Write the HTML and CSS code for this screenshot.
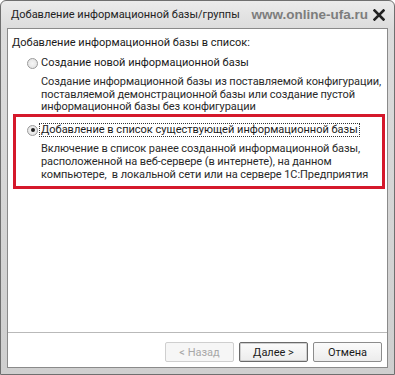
FILE: index.html
```html
<!DOCTYPE html>
<html lang="ru">
<head>
<meta charset="utf-8">
<title>Добавление информационной базы/группы</title>
<link rel="stylesheet" href="styles.css">
</head>
<body>
<div class="window">
  <div class="titlebar">
    <span class="title">Добавление информационной базы/группы</span>
    <span class="watermark">www.online-ufa.ru</span>
    <svg class="close" width="12" height="12" viewBox="0 0 12 12"><path d="M1.5 1.5 L10.5 10.5 M10.5 1.5 L1.5 10.5" stroke="#222" stroke-width="2.6" stroke-linecap="square"/></svg>
  </div>
  <div class="client">
    <div class="content">
      <div class="heading">Добавление информационной базы в список:</div>
      <div class="option">
        <div class="option-row">
          <span class="radio"></span>
          <span class="label">Создание новой информационной базы</span>
        </div>
        <div class="desc">Создание информационной базы из поставляемой конфигурации,<br>поставляемой демонстрационной базы или создание пустой<br>информационной базы без конфигурации</div>
      </div>
      <div class="option highlighted">
        <div class="option-row">
          <span class="radio checked"></span>
          <span class="label focused">Добавление в список существующей информационной базы</span>
        </div>
        <div class="desc">Включение в список ранее созданной информационной базы,<br>расположенной на веб-сервере (в интернете), на данном<br>компьютере,&nbsp; в локальной сети или на сервере 1С:Предприятия</div>
      </div>
    </div>
    <div class="footer">
      <button class="btn disabled" disabled>&lt; Назад</button>
      <button class="btn default">Далее &gt;</button>
      <button class="btn">Отмена</button>
    </div>
  </div>
</div>
</body>
</html>
```

FILE: styles.css
```css
html, body {
  margin: 0;
  padding: 0;
  background: #ffffff;
}
body {
  font-family: Roboto, "Liberation Sans", Arial, sans-serif;
  font-size: 11px;
  color: #1a1a1a;
  white-space: nowrap;
}
.window {
  width: 395px;
  height: 375px;
  box-sizing: border-box;
  border: 1px solid #6f6f6f;
  border-radius: 6px 6px 0 0;
  background: linear-gradient(to bottom, #ebebeb 0, #dcdcdc 28px, #cfcfcf 100%);
  padding: 0 6px 6px 6px;
  display: flex;
  flex-direction: column;
}
.titlebar {
  height: 27px;
  display: flex;
  align-items: center;
  padding-left: 4px;
  flex: none;
}
.title {
  color: #222;
  font-size: 11px;
  flex: none;
}
.watermark {
  margin-left: auto;
  font-family: "Liberation Sans", Arial, sans-serif;
  font-weight: bold;
  font-size: 13.5px;
  color: #7d7d7d;
  flex: none;
}
.close {
  margin-left: 5px;
  margin-right: 3px;
  flex: none;
}
.client {
  flex: 1;
  background: #fff;
  border: 1px solid #8a8a8a;
  display: flex;
  flex-direction: column;
  justify-content: space-between;
}
.content {
  padding: 7px 0 0 4px;
}
.heading {
  line-height: 14px;
}
.option {
  margin-top: 6px;
  padding-left: 15px;
}
.option-row {
  display: flex;
  align-items: center;
  height: 14px;
}
.radio {
  width: 11px;
  height: 11px;
  box-sizing: border-box;
  border: 1px solid #9a9a9a;
  border-radius: 50%;
  background: radial-gradient(circle, #f6f6f6 0, #dedede 100%);
  margin-right: 1px;
  position: relative;
  flex: none;
}
.radio.checked::after {
  content: "";
  position: absolute;
  left: 2.5px;
  top: 2.5px;
  width: 4px;
  height: 4px;
  border-radius: 50%;
  background: #222;
}
.label {
  line-height: 12px;
  padding: 0 1px;
  border: 1px dotted transparent;
}
.label.focused {
  border-color: #333;
}
.desc {
  margin-top: 6px;
  padding-left: 14px;
  line-height: 12.7px;
  color: #2a2a2a;
  letter-spacing: -0.08px;
}
.highlighted {
  margin-top: 0;
  margin-left: 1px;
  margin-right: 2px;
  border: 3px solid #d5182b;
  padding: 6px 0 5px 11px;
}
.footer {
  border-top: 1px solid #b9b9b9;
  padding: 9px 5px 5px 0;
  display: flex;
  justify-content: flex-end;
  gap: 5px;
}
.btn {
  width: 69px;
  height: 20px;
  font-family: Roboto, "Liberation Sans", Arial, sans-serif;
  font-size: 11px;
  color: #1a1a1a;
  background: linear-gradient(to bottom, #fbfbfb, #ececec);
  border: 1px solid #8c8c8c;
  border-radius: 2px;
  padding: 0;
}
.btn.default {
  border-color: #6a6a6a;
  box-shadow: inset 0 0 0 1px #d0d0d0;
}
.btn.disabled {
  color: #a8a8a8;
  border-color: #cfcfcf;
  background: #f6f6f6;
}
```
